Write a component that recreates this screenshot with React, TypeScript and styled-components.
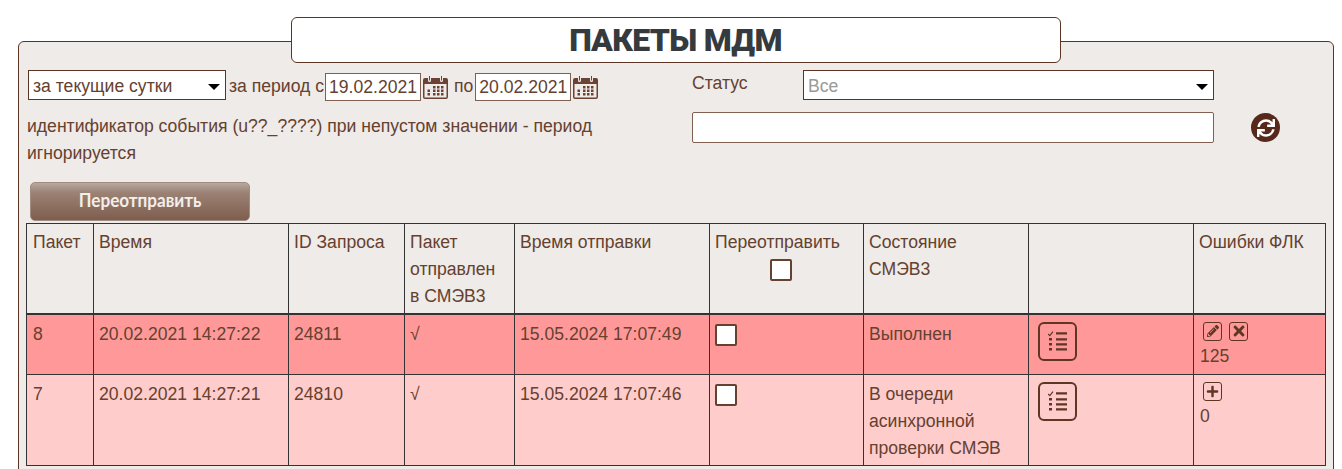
import React from "react";
import { createGlobalStyle, styled } from "styled-components";
import { FaPencilAlt, FaPlus, FaSync, FaTimes } from "react-icons/fa";

interface PacketRow {
  id: string;
  time: string;
  requestId: string;
  sent: string;
  sentAt: string;
  state: string[];
  errors: string;
  expanded: boolean;
  tone: "strong" | "light";
}

const rows: PacketRow[] = [
  {
    id: "8",
    time: "20.02.2021 14:27:22",
    requestId: "24811",
    sent: "√",
    sentAt: "15.05.2024 17:07:49",
    state: ["Выполнен"],
    errors: "125",
    expanded: true,
    tone: "strong",
  },
  {
    id: "7",
    time: "20.02.2021 14:27:21",
    requestId: "24810",
    sent: "√",
    sentAt: "15.05.2024 17:07:46",
    state: ["В очереди", "асинхронной", "проверки СМЭВ"],
    errors: "0",
    expanded: false,
    tone: "light",
  },
];

const columnWidths = [67, 195, 116, 110, 195, 154, 165, 165, 132];

const CalendarIcon = () => (
  <CalendarSvg viewBox="0 0 25 25" aria-hidden="true">
    <path
      fill="#6b4233"
      d="M2 3h3v2.500a1.500 1.500 0 0 0 3 0V3h9v2.500a1.500 1.500 0 0 0 3 0V3h3a2 2 0 0 1 2 2v17a2 2 0 0 1-2 2H2a2 2 0 0 1-2-2V5a2 2 0 0 1 2-2z"
    />
    <path fill="#6b4233" d="M6 1h1v4.500H6zM18 1h1v4.500h-1z" />
    <rect x="1.500" y="9" width="22" height="13.500" fill="#efebe8" />
    <path
      fill="#6b4233"
      d="M10 11h2.500v2.500H10zM14 11h2.500v2.500H14zM18 11h2.500v2.500H18zM4.500 14.500H7V17H4.500zM10 14.500h2.500V17H10zM14 14.500h2.500V17H14zM18 14.500h2.500V17H18zM4.500 18H7v2.500H4.500zM10 18h2.500v2.500H10zM14 18h2.500v2.500H14zM18 18h2.500v2.500H18z"
    />
  </CalendarSvg>
);

const ChecklistIcon = () => (
  <ChecklistSvg viewBox="0 0 19 20" aria-hidden="true">
    <path d="M0.200 3l1.600 1.600L5 0.600" fill="none" stroke="#5f3524" strokeWidth="1.200" />
    <path
      fill="#5f3524"
      d="M1 7h3v2.600H1zM1 12h3v2.600H1zM1 17h3v2.600H1zM8 1.300h11v2.300H8zM8 7.300h11v2.300H8zM8 12.300h11v2.300H8zM8 17.300h11v2.300H8z"
    />
  </ChecklistSvg>
);

const App: React.FC = () => {
  return (
    <Page>
      <GlobalStyle />
      <Panel>
        <TitleBox>ПАКЕТЫ МДМ</TitleBox>
        <Filters>
          <FilterLeft>
            <PeriodRow>
              <SelectBox $width={198}>
                <NativeSelect defaultValue="day">
                  <option value="day">за текущие сутки</option>
                </NativeSelect>
              </SelectBox>
              <PeriodLabel>за период с</PeriodLabel>
              <DateInput defaultValue="19.02.2021" />
              <CalendarIcon />
              <ToLabel>по</ToLabel>
              <DateInput defaultValue="20.02.2021" />
              <CalendarIcon />
            </PeriodRow>
            <Hint>
              идентификатор события (u??_????) при непустом значении - период игнорируется
            </Hint>
          </FilterLeft>
          <FilterRight>
            <StatusRow>
              <StatusLabel>Статус</StatusLabel>
              <SelectBox $width={411}>
                <NativeSelect $muted defaultValue="all">
                  <option value="all">Все</option>
                </NativeSelect>
              </SelectBox>
            </StatusRow>
            <SearchRow>
              <SearchInput />
              <RefreshButton type="button" aria-label="Обновить">
                <FaSync />
              </RefreshButton>
            </SearchRow>
          </FilterRight>
        </Filters>
        <ResendButton type="button">
          <ResendLabel>Переотправить</ResendLabel>
        </ResendButton>
        <Table>
          <colgroup>
            {columnWidths.map((width, index) => (
              <col key={index} width={width} />
            ))}
          </colgroup>
          <thead>
            <tr>
              <Th>Пакет</Th>
              <Th>Время</Th>
              <Th>ID Запроса</Th>
              <Th>Пакет отправлен в СМЭВ3</Th>
              <Th>Время отправки</Th>
              <Th>
                Переотправить
                <HeaderCheck>
                  <Checkbox />
                </HeaderCheck>
              </Th>
              <Th>Состояние СМЭВ3</Th>
              <Th />
              <Th>Ошибки ФЛК</Th>
            </tr>
          </thead>
          <tbody>
            {rows.map((row) => (
              <Tr key={row.id} $tone={row.tone}>
                <Td>{row.id}</Td>
                <Td>{row.time}</Td>
                <Td>{row.requestId}</Td>
                <Td>{row.sent}</Td>
                <Td>{row.sentAt}</Td>
                <Td>
                  <RowCheck>
                    <Checkbox />
                  </RowCheck>
                </Td>
                <Td>
                  {row.state.map((line) => (
                    <div key={line}>{line}</div>
                  ))}
                </Td>
                <Td>
                  <ListButton type="button" aria-label="Список">
                    <ChecklistIcon />
                  </ListButton>
                </Td>
                <Td>
                  <ErrorTools>
                    {row.expanded ? (
                      <>
                        <ToolButton type="button" aria-label="Изменить">
                          <FaPencilAlt size={12} />
                        </ToolButton>
                        <ToolButton type="button" aria-label="Удалить">
                          <FaTimes size={16} />
                        </ToolButton>
                      </>
                    ) : (
                      <ToolButton type="button" aria-label="Добавить">
                        <FaPlus size={13} />
                      </ToolButton>
                    )}
                  </ErrorTools>
                  <ErrorCount>{row.errors}</ErrorCount>
                </Td>
              </Tr>
            ))}
          </tbody>
        </Table>
      </Panel>
    </Page>
  );
};

export default App;

const GlobalStyle = createGlobalStyle`
  html, body {
    margin: 0;
    padding: 0;
    background: #fff;
    height: 469px;
    overflow: hidden;
  }
  body {
    font-family: "Liberation Sans", Arial, sans-serif;
    font-size: 17.6px;
    color: #65412f;
  }
`;

const Page = styled.div`
  padding: 41px 8px 0 18px;
`;

const Panel = styled.div`
  height: 440px;
  box-sizing: border-box;
  padding: 0 8px 0 7px;
  background: #efebe8;
  border: 1px solid #5c3424;
  border-radius: 6px 6px 0 0;
`;

const TitleBox = styled.div`
  box-sizing: border-box;
  width: 770px;
  height: 46px;
  margin: -25px auto 0;
  background: #fff;
  border: 1px solid #5c3424;
  border-radius: 6px;
  font-family: "Roboto", sans-serif;
  font-weight: 900;
  font-size: 32px;
  line-height: 44px;
  letter-spacing: -0.7px;
  text-align: center;
  color: #343a3d;
`;

const Filters = styled.div`
  display: grid;
  grid-template-columns: 666px 1fr;
  margin-top: 7px;
`;

const FilterLeft = styled.div`
  min-width: 0;
`;

const PeriodRow = styled.div`
  display: flex;
  align-items: flex-start;
  gap: 2px;
  padding-left: 2px;
`;

const SelectBox = styled.div<{ $width: number }>`
  position: relative;
  flex: none;
  width: ${(props) => props.$width}px;
  height: 30px;

  &::after {
    content: "";
    position: absolute;
    top: 14px;
    right: 6px;
    border-style: solid;
    border-width: 6px 6px 0;
    border-color: #000 transparent transparent;
    pointer-events: none;
  }
`;

const NativeSelect = styled.select<{ $muted?: boolean }>`
  display: block;
  box-sizing: border-box;
  width: 100%;
  height: 100%;
  padding: 2px 0 0 4px;
  appearance: none;
  background: #fff;
  border: 1px solid #5c3424;
  border-radius: 0;
  font: 17.6px "Liberation Sans", sans-serif;
  color: ${(props) => (props.$muted ? "#999" : "#65412f")};
  outline: none;
`;

const PeriodLabel = styled.span`
  margin: 0 -1px 0 1px;
  line-height: 32px;
`;

const DateInput = styled.input`
  box-sizing: border-box;
  flex: none;
  width: 96px;
  height: 28px;
  margin-top: 3px;
  padding: 0 3px;
  background: #fff;
  border: 1px solid #82604f;
  font: 17.6px "Liberation Sans", sans-serif;
  color: #65412f;
  outline: none;
`;

const CalendarSvg = styled.svg`
  width: 25px;
  height: 25px;
  margin-top: 5px;
  flex: none;
`;

const ToLabel = styled.span`
  margin-left: 4px;
  line-height: 32px;
`;

const Hint = styled.p`
  width: 610px;
  margin: 11px 0 0 1px;
  line-height: 27px;
`;

const FilterRight = styled.div`
  display: flex;
  flex-direction: column;
  gap: 12px;
`;

const StatusRow = styled.div`
  display: flex;
  align-items: flex-start;
`;

const StatusLabel = styled.span`
  width: 111px;
  line-height: 27px;
`;

const SearchRow = styled.div`
  display: flex;
  align-items: center;
`;

const SearchInput = styled.input`
  box-sizing: border-box;
  flex: none;
  width: 522px;
  height: 31px;
  background: #fff;
  border: 1px solid #82604f;
  border-radius: 2px;
  outline: none;
`;

const RefreshButton = styled.button`
  display: flex;
  align-items: center;
  justify-content: center;
  flex: none;
  width: 29px;
  height: 29px;
  margin-left: 37px;
  padding: 0;
  border: none;
  border-radius: 50%;
  background: #56291b;
  color: #fff;
  font-size: 18px;
`;

const ResendButton = styled.button`
  display: block;
  box-sizing: border-box;
  width: 220px;
  height: 39px;
  margin: 15px 0 2px 4px;
  padding: 0 0 4px;
  border: 1px solid #a08c80;
  border-radius: 5px;
  background: linear-gradient(#b8a99f 0%, #9c8375 25%, #7e5d4e 100%);
  font-family: "Lato", sans-serif;
  font-weight: 700;
  font-size: 19px;
  color: #f3eeea;
`;

const ResendLabel = styled.span`
  display: inline-block;
  transform: scaleX(0.9);
`;

const Table = styled.table`
  width: 1299px;
  table-layout: fixed;
  border-collapse: collapse;
  color: #65412f;
`;

const Th = styled.th`
  height: 90px;
  box-sizing: border-box;
  padding: 5px 6px 0 5px;
  border: 1px solid #333;
  border-bottom: 2px solid #333;
  background: #efebe8;
  font-weight: 400;
  font-size: 17.6px;
  line-height: 27px;
  text-align: left;
  vertical-align: top;

  &:first-child {
    padding-left: 6px;
  }
`;

const HeaderCheck = styled.div`
  display: flex;
  justify-content: center;
  margin-top: 3px;
  padding-right: 10px;
`;

const Tr = styled.tr<{ $tone: "strong" | "light" }>`
  height: 60.5px;
  background: ${(props) => (props.$tone === "strong" ? "#ff9999" : "#ffcccc")};
`;

const Td = styled.td`
  box-sizing: border-box;
  padding: 6px 6px 3.5px 5px;
  border: 1px solid #333;
  line-height: 27px;
  vertical-align: top;

  &:first-child {
    padding-left: 6px;
  }
`;

const RowCheck = styled.div`
  padding-top: 3px;
`;

const Checkbox = styled.span`
  display: block;
  box-sizing: border-box;
  width: 22px;
  height: 22px;
  background: #fff;
  border: 2px solid #65412f;
  border-radius: 2px;
`;

const ListButton = styled.button`
  display: flex;
  align-items: center;
  justify-content: center;
  box-sizing: border-box;
  width: 39px;
  height: 39px;
  margin: 1px 0 0 4px;
  padding: 0;
  background: transparent;
  border: 2px solid #5f3524;
  border-radius: 6px;
`;

const ChecklistSvg = styled.svg`
  width: 19px;
  height: 20px;
`;

const ErrorTools = styled.div`
  display: flex;
  gap: 7px;
  margin: 1px 0 0 4px;
`;

const ToolButton = styled.button`
  display: flex;
  align-items: center;
  justify-content: center;
  box-sizing: border-box;
  width: 19px;
  height: 19px;
  padding: 0;
  background: transparent;
  border: 1px solid #5f3524;
  border-radius: 3px;
  color: #5f3524;
`;

const ErrorCount = styled.div`
  line-height: 20px;
  margin: 5px 0 0 1px;
`;
